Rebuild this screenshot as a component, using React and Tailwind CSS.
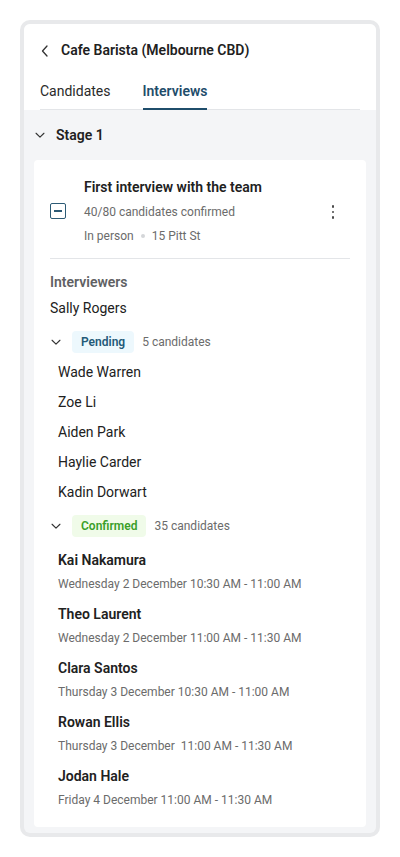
import React from "react";

const Chevron = ({ dir = "down", className = "" }) => {
  const d =
    dir === "left"
      ? "M10 3 L5.5 8 L10 13"
      : "M3.5 6 L8 10.5 L12.5 6";
  return (
    <svg viewBox="0 0 16 16" className={className} fill="none" stroke="currentColor" strokeWidth="1.3" strokeLinecap="round" strokeLinejoin="round">
      <path d={d} />
    </svg>
  );
};

const pending = ["Wade Warren", "Zoe Li", "Aiden Park", "Haylie Carder", "Kadin Dorwart"];
const confirmed = [
  ["Kai Nakamura", "Wednesday 2 December 10:30 AM - 11:00 AM"],
  ["Theo Laurent", "Wednesday 2 December 11:00 AM - 11:30 AM"],
  ["Clara Santos", "Thursday 3 December 10:30 AM - 11:00 AM"],
  ["Rowan Ellis", "Thursday 3 December\u00a0 11:00 AM - 11:30 AM"],
  ["Jodan Hale", "Friday 4 December 11:00 AM - 11:30 AM"],
];

export default function App() {
  return (
    <div className="w-[400px] h-[857px] bg-white p-5 font-['Roboto',sans-serif] text-[#212121]">
      <div className="h-full rounded-[10px] bg-[#e8e9eb] p-1">
        <div className="h-full rounded-[6px] bg-[#f4f5f7] overflow-hidden flex flex-col">
          {/* header */}
          <div className="bg-white">
            <div className="h-[52px] flex items-center px-4 pt-px">
              <Chevron dir="left" className="w-4 h-4 -ml-[3px] text-[#333]" />
              <span className="ml-[8px] text-[14px] font-semibold">Cafe Barista (Melbourne CBD)</span>
            </div>
            <div className="mx-4 h-[34px] flex items-end border-b border-[#e3e5e8]">
              <div className="h-full flex items-center pb-[3px] text-[14px] text-[#2a2a2a]">Candidates</div>
              <div className="ml-[32px] h-full flex items-center border-b-2 border-[#1f4d6b] -mb-px pb-[3px] text-[14px] font-semibold text-[#1f4d6b]">
                Interviews
              </div>
            </div>
          </div>
          {/* stage */}
          <div className="h-[50px] flex items-center pl-[9px]">
            <Chevron className="w-[14px] h-[14px] text-[#333]" />
            <span className="ml-[9px] text-[14px] font-semibold">Stage 1</span>
          </div>
          <div className="mx-[10px] bg-white rounded-[4px] px-4 pt-[15px] pb-[15px]">
            <div className="flex items-start border-b border-[#e3e5e8] pb-[10px]">
              <div className="w-4 mt-[28px] h-4 rounded-[2px] border-[1.5px] border-[#2c5a75] flex items-center justify-center">
                <div className="w-[8px] h-[1.5px] bg-[#2c5a75]" />
              </div>
              <div className="ml-[18px] flex-1">
                <div className="leading-6 text-[14px] font-semibold mb-px">First interview with the team</div>
                <div className="leading-6 text-[12px] text-[#6b6b6b]">40/80 candidates confirmed</div>
                <div className="leading-6 text-[12px] text-[#6b6b6b] flex items-center">
                  <span>In person</span>
                  <span className="mx-[7px] w-[4px] h-[4px] rounded-full bg-[#d4d6d9]" />
                  <span>15 Pitt St</span>
                </div>
              </div>
              <div className="mt-[30px] mr-[16px] flex flex-col items-center gap-[3px]">
                <div className="w-[2.5px] h-[2.5px] rounded-full bg-[#4a4a4a]" />
                <div className="w-[2.5px] h-[2.5px] rounded-full bg-[#4a4a4a]" />
                <div className="w-[2.5px] h-[2.5px] rounded-full bg-[#4a4a4a]" />
              </div>
            </div>
            <div className="mt-[11px] leading-6 text-[14px] font-semibold text-[#5f6163]">Interviewers</div>
            <div className="mt-[2px] leading-6 text-[14px]">Sally Rogers</div>

            <div className="mt-[11px] flex items-center h-[22px]">
              <Chevron className="w-[14px] h-[14px] -ml-px text-[#333]" />
              <span className="ml-[9px] h-[22px] px-[9px] rounded-[4px] bg-[#edf8fd] text-[12px] font-semibold text-[#235a78] flex items-center">Pending</span>
              <span className="ml-2 text-[12px] text-[#6b6b6b]">5 candidates</span>
            </div>
            <div className="mt-[4px]">
              {pending.map((n) => (
                <div key={n} className="h-[30px] flex items-center pl-2 text-[14px]">{n}</div>
              ))}
            </div>
            <div className="mt-[8px] flex items-center h-[22px]">
              <Chevron className="w-[14px] h-[14px] -ml-px text-[#333]" />
              <span className="ml-[9px] h-[22px] px-[9px] rounded-[4px] bg-[#f0fbe9] text-[12px] font-semibold text-[#3a9f2a] flex items-center">Confirmed</span>
              <span className="ml-2 text-[12px] text-[#6b6b6b]">35 candidates</span>
            </div>
            <div className="mt-[11px] flex flex-col gap-[6px]">
              {confirmed.map(([n, d]) => (
                <div key={n} className="pl-2">
                  <div className="leading-6 text-[14px] font-semibold">{n}</div>
                  <div className="leading-6 text-[12px] text-[#6b6b6b] whitespace-pre">{d}</div>
                </div>
              ))}
            </div>
          </div>
        </div>
      </div>
    </div>
  );
}
